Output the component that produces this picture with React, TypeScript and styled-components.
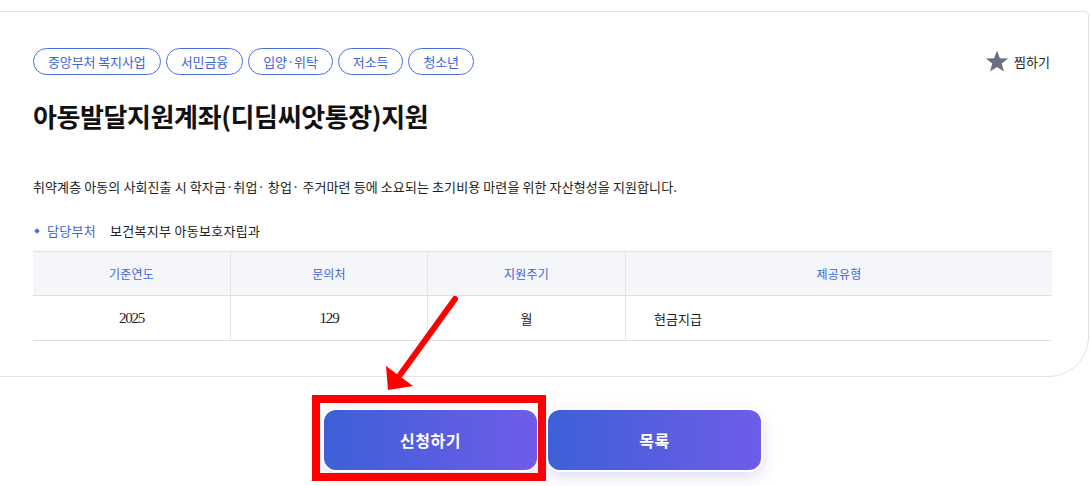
import React from "react";
import styled, { createGlobalStyle } from "styled-components";

const Global = createGlobalStyle`
  html, body { margin: 0; padding: 0; background: #fff; }
  body { font-family: "Noto Sans CJK KR", "Noto Sans", sans-serif; color: #222; overflow: hidden; }
  * { box-sizing: border-box; }
`;

const Page = styled.div`
  position: relative;
  width: 1091px;
  height: 486px;
  padding-top: 11px;
`;

const Card = styled.section`
  margin: 0 2px 0 -4px;
  border: 1px solid #e2e2e2;
  border-radius: 4px 4px 40px 4px;
  padding: 36px 36px 35px 36px;
  background: #fff;
`;

const TopRow = styled.div`
  display: flex;
  justify-content: space-between;
  align-items: center;
`;

const Tags = styled.div`
  display: flex;
  gap: 5px;
`;

const Tag = styled.span`
  display: inline-flex;
  align-items: center;
  height: 27px;
  padding: 0 14px;
  border: 1px solid #4a6ee0;
  border-radius: 14px;
  color: #3e63db;
  font-size: 13px;
  letter-spacing: -0.1px;
`;

const Favorite = styled.button`
  display: flex;
  align-items: center;
  gap: 5px;
  border: 0;
  background: none;
  padding: 0;
  font-family: inherit;
  font-size: 13px;
  color: #222;
  margin-right: 2px;
`;

const Title = styled.h1`
  margin: 23px 0 0;
  font-size: 26px;
  line-height: 36px;
  font-weight: 700;
  letter-spacing: -0.4px;
  color: #111;
`;

const Desc = styled.p`
  margin: 43px 0 0;
  font-size: 13px;
  line-height: 20px;
  letter-spacing: 0.1px;
  color: #222;
`;

const Dept = styled.div`
  display: flex;
  align-items: center;
  margin-top: 24px;
  font-size: 13px;
  line-height: 20px;
  letter-spacing: 0.3px;
`;

const Dot = styled.span`
  width: 4px;
  height: 4px;
  background: #4a6ee0;
  transform: rotate(45deg);
  margin: 0 8px 0 2px;
`;

const DeptLabel = styled.span`
  color: #3e63db;
  margin-right: 14px;
`;

const Table = styled.div`
  margin-top: 10px;
  display: grid;
  grid-template-columns: 198px 197px 198px 1fr;
  border-top: 1px solid #e0e0e0;
  border-bottom: 1px solid #e0e0e0;
`;

const Th = styled.div<{ $last?: boolean }>`
  height: 44px;
  display: flex;
  align-items: center;
  justify-content: center;
  background: #f5f6fa;
  border-bottom: 1px solid #e0e0e0;
  border-right: ${(p) => (p.$last ? "0" : "1px solid #e3e3e3")};
  color: #3e63db;
  font-size: 12px;
  letter-spacing: 0.2px;
`;

const Td = styled.div<{ $left?: boolean; $last?: boolean; $num?: boolean }>`
  height: 44px;
  display: flex;
  align-items: center;
  justify-content: ${(p) => (p.$left ? "flex-start" : "center")};
  padding-left: ${(p) => (p.$left ? "28px" : "0")};
  border-right: ${(p) => (p.$last ? "0" : "1px solid #e3e3e3")};
  font-size: ${(p) => (p.$num ? "15px" : "13px")};
  font-family: ${(p) => (p.$num ? '"Liberation Serif", serif' : "inherit")};
  letter-spacing: ${(p) => (p.$num ? "-1.2px" : "0px")};
  color: #222;
`;

const Actions = styled.div`
  display: flex;
  justify-content: center;
  gap: 7px;
  margin-top: 31px;
  padding-right: 6px;
`;

const ButtonWrap = styled.div`
  position: relative;
`;

const ActionButton = styled.button`
  width: 217px;
  height: 64px;
  border: 2px solid #fff;
  border-radius: 14px;
  background: linear-gradient(90deg, #3d60d6 0%, #6f5ce9 100%);
  box-shadow: 0 5px 14px rgba(110, 100, 220, 0.22);
  color: #fff;
  font-family: inherit;
  font-size: 16px;
  font-weight: 700;
  letter-spacing: 0.5px;
`;

const Highlight = styled.div`
  position: absolute;
  left: -10px;
  top: -13px;
  right: -7px;
  bottom: -9px;
  border: 8px solid #ff0000;
  pointer-events: none;
`;

const Overlay = styled.svg`
  position: absolute;
  left: 0;
  top: 0;
  pointer-events: none;
`;

export default function App() {
  return (
    <Page>
      <Global />
      <Card>
        <TopRow>
          <Tags>
            <Tag>중앙부처 복지사업</Tag>
            <Tag>서민금융</Tag>
            <Tag>입양·위탁</Tag>
            <Tag>저소득</Tag>
            <Tag>청소년</Tag>
          </Tags>
          <Favorite>
            <svg width="24" height="23" viewBox="0 0 24 23">
              <polygon
                points="12,0.5 14.9,8.2 23.2,8.5 16.7,13.6 19,21.6 12,17 5,21.6 7.3,13.6 0.8,8.5 9.1,8.2"
                fill="#6b6f84"
              />
            </svg>
            찜하기
          </Favorite>
        </TopRow>
        <Title>아동발달지원계좌(디딤씨앗통장)지원</Title>
        <Desc>
          취약계층 아동의 사회진출 시 학자금·취업· 창업· 주거마련 등에 소요되는 초기비용 마련을 위한 자산형성을 지원합니다.
        </Desc>
        <Dept>
          <Dot />
          <DeptLabel>담당부처</DeptLabel>
          <span>보건복지부 아동보호자립과</span>
        </Dept>
        <Table>
          <Th>기준연도</Th>
          <Th>문의처</Th>
          <Th>지원주기</Th>
          <Th $last>제공유형</Th>
          <Td $num>2025</Td>
          <Td $num>129</Td>
          <Td>월</Td>
          <Td $left $last>현금지급</Td>
        </Table>
      </Card>
      <Actions>
        <ButtonWrap>
          <ActionButton>신청하기</ActionButton>
          <Highlight />
        </ButtonWrap>
        <ButtonWrap>
          <ActionButton>목록</ActionButton>
        </ButtonWrap>
      </Actions>
      <Overlay width="1091" height="486" viewBox="0 0 1091 486">
        <line x1="455" y1="299" x2="400" y2="375" stroke="#ff0000" strokeWidth="6" strokeLinecap="round" />
        <polygon points="388,390 386,366 413,386" fill="#ff0000" />
      </Overlay>
    </Page>
  );
}
